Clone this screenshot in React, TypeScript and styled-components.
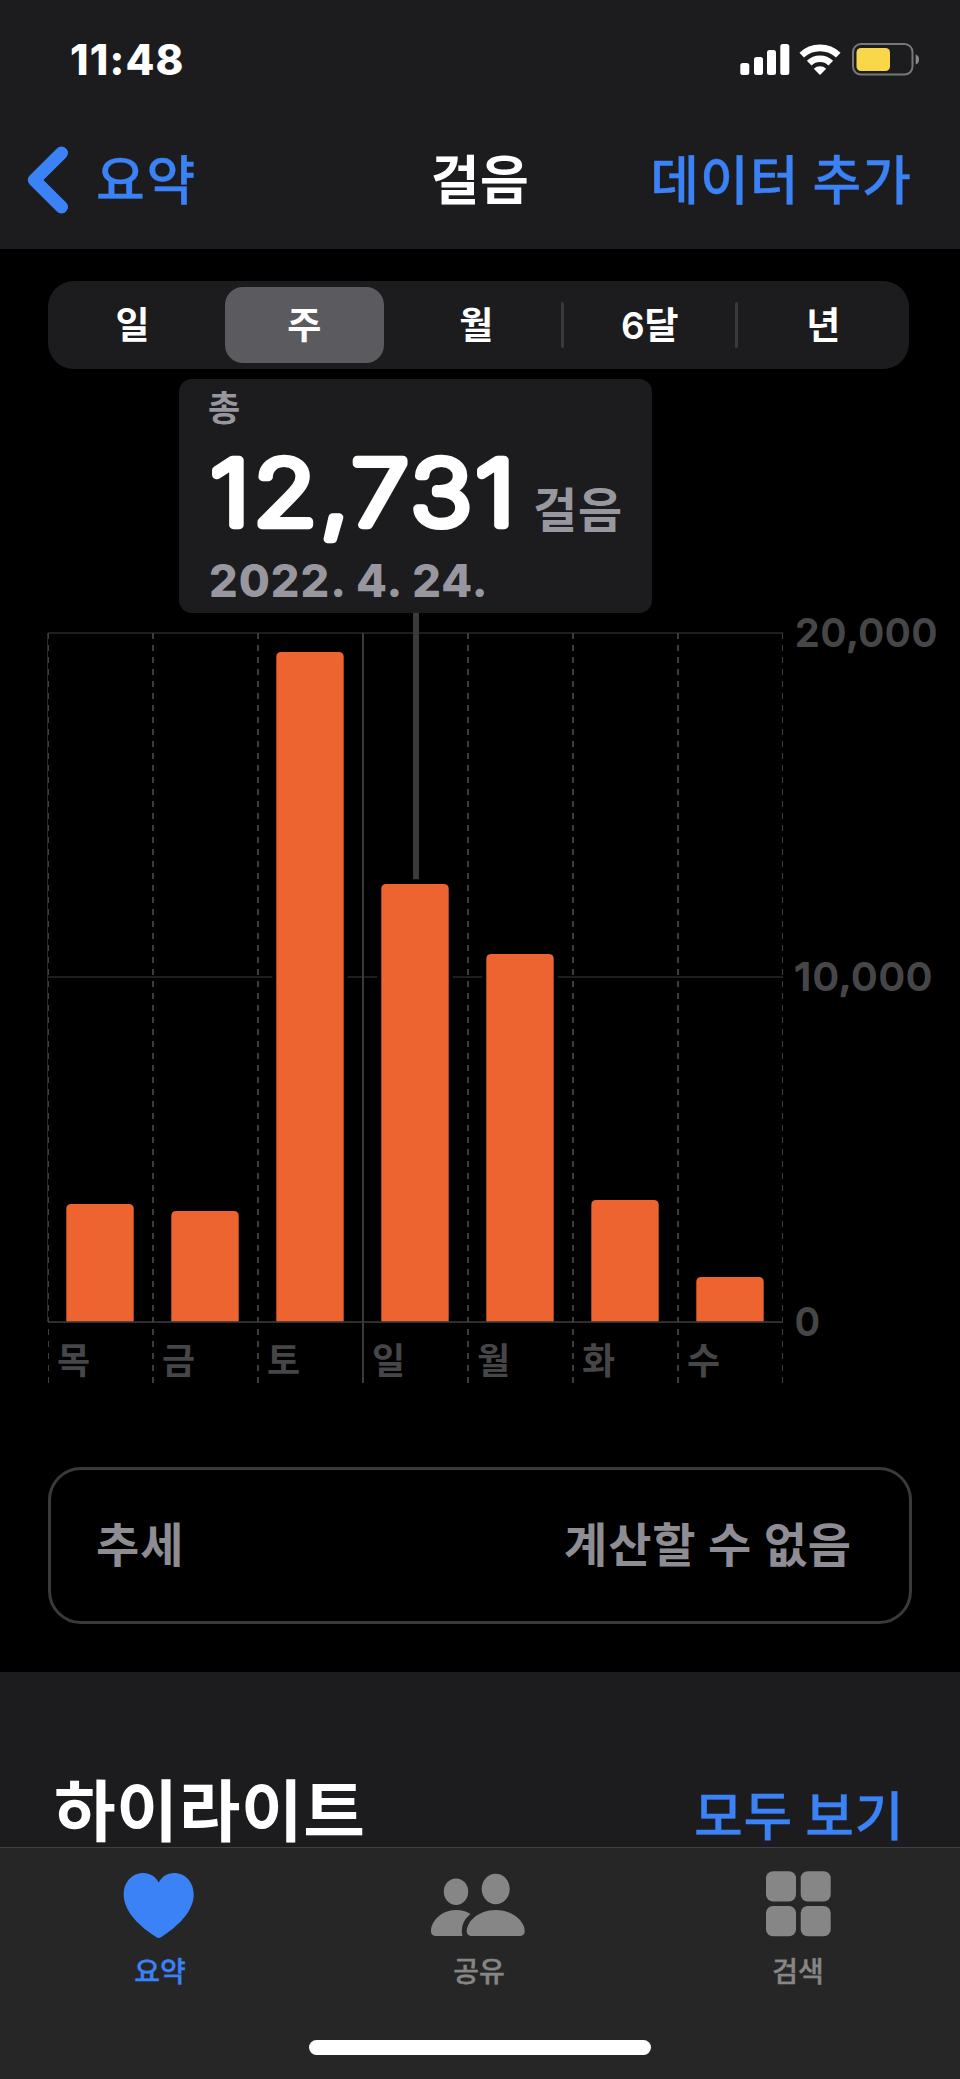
import React from "react";
import styled, { createGlobalStyle } from "styled-components";

const korean = `"Noto Sans CJK KR", sans-serif`;
const latin = `Inter, "Noto Sans CJK KR", sans-serif`;

const GlobalStyle = createGlobalStyle`
  * { box-sizing: border-box; }
  body { margin: 0; background: #000; }
`;

const Screen = styled.div`
  width: 960px;
  height: 2079px;
  display: flex;
  flex-direction: column;
  overflow: hidden;
  background: #000;
  color: #fff;
  font-family: ${korean};
`;

const Header = styled.header`
  height: 249px;
  flex: none;
  background: #1c1c1e;
`;

const StatusBar = styled.div`
  height: 120px;
  padding: 0 40px 0 70px;
  display: flex;
  justify-content: space-between;
  align-items: center;
`;

const Clock = styled.span`
  font: 800 42px/60px ${latin};
  letter-spacing: 1.2px;
`;

const StatusIcons = styled.svg`
  width: 182px;
  height: 36px;
`;

const NavBar = styled.nav`
  height: 129px;
  padding: 0 48px 10px 26px;
  display: grid;
  grid-template-columns: 1fr auto 1fr;
  align-items: center;
`;

const BackButton = styled.div`
  display: flex;
  align-items: center;
  gap: 26px;
  color: #3b82f7;
`;

const Chevron = styled.svg`
  width: 44px;
  height: 72px;
`;

const NavText = styled.span<{ $strong?: boolean; $end?: boolean }>`
  margin: ${(p) => (p.$strong ? "-6px 0 0 22px" : "-6px 0 0")};
  font-size: 53px;
  line-height: 72px;
  letter-spacing: ${(p) => (p.$strong ? "0.5px" : p.$end ? "1px" : "1.8px")};
  font-weight: ${(p) => (p.$strong ? 700 : 500)};
  color: ${(p) => (p.$strong ? "#fff" : "#3b82f7")};
  justify-self: ${(p) => (p.$end ? "end" : "auto")};
  -webkit-text-stroke: ${(p) => (p.$strong ? "0" : "0.3px currentColor")};
  white-space: nowrap;
`;

const Segments = styled.div`
  width: 861px;
  height: 88px;
  margin: 32px 0 0 48px;
  padding: 6px 0;
  flex: none;
  display: grid;
  grid-template-columns: 167px repeat(4, 1fr);
  border-radius: 26px;
  background: #1c1c1e;
`;

const Segment = styled.div<{ $selected?: boolean; $divided?: boolean }>`
  display: flex;
  align-items: center;
  justify-content: center;
  position: relative;
  margin: ${(p) => (p.$selected ? "0 5px 0 10px" : "0")};
  padding: ${(p) => (p.$selected ? "1px 0 0" : "1px 0 0 2px")};
  border-radius: 18px;
  background: ${(p) => (p.$selected ? "#5b5a5f" : "transparent")};
  font: 600 37px/52px ${latin};

  &::before {
    content: "";
    display: ${(p) => (p.$divided ? "block" : "none")};
    position: absolute;
    left: -1px;
    top: 15px;
    width: 3px;
    height: 46px;
    border-radius: 2px;
    background: #3a3a3c;
  }
`;

const ChartArea = styled.section`
  position: relative;
  height: 1098px;
  flex: none;
`;

const ChartCanvas = styled.svg`
  display: block;
  width: 960px;
  height: 1098px;
`;

const AxisNumber = styled.text`
  font: 400 37px ${latin};
  letter-spacing: 1.2px;
  fill: #464648;
  stroke: #464648;
  stroke-width: 1.8px;
  stroke-linejoin: round;
`;

const DayLabel = styled.text`
  font: 700 36px ${korean};
  fill: #464648;
`;

const Callout = styled.div`
  position: absolute;
  left: 179px;
  top: 10px;
  width: 473px;
  height: 234px;
  padding: 0 0 0 30px;
  border-radius: 13px;
  background: #1c1c1e;
  color: #98979f;
`;

const CalloutCaption = styled.div`
  height: 64px;
  margin-left: -1px;
  font: 700 35px/54px ${korean};
`;

const CalloutValue = styled.div`
  height: 104px;
  display: flex;
  align-items: flex-start;
  gap: 22px;
`;

const StepCount = styled.svg`
  width: 302px;
  height: 104px;
  overflow: visible;
`;

const RoundedDigits = styled.text`
  font: 200 90px ${latin};
  letter-spacing: 3.5px;
  fill: #fff;
  stroke: #fff;
  stroke-width: 8.6px;
  stroke-linejoin: round;
`;

const StepUnit = styled.span`
  margin-top: 34px;
  font: 700 48px/60px ${korean};
  letter-spacing: 0.8px;
`;

const CalloutDate = styled.div`
  height: 66px;
  padding-top: 1px;
  font: 800 45px/66px ${latin};
  letter-spacing: 1px;
`;

const TrendCard = styled.div`
  width: 864px;
  height: 157px;
  margin-left: 48px;
  padding: 0 57px 7px 45px;
  flex: none;
  display: flex;
  justify-content: space-between;
  align-items: center;
  border: 3px solid #3a3a3a;
  border-radius: 33px;
  color: #8e8d93;
  font: 700 47px/66px ${korean};
  letter-spacing: 0.9px;
`;

const Highlights = styled.section`
  height: 175px;
  margin-top: 48px;
  padding: 95px 56px 0 54px;
  flex: none;
  display: flex;
  justify-content: space-between;
  align-items: baseline;
  background: #1c1c1e;
`;

const SectionTitle = styled.h2`
  margin: 0;
  font: 700 67px/80px ${korean};
  letter-spacing: 0.7px;
`;

const SeeAll = styled.span`
  font: 500 53px/70px ${korean};
  letter-spacing: 0.6px;
  -webkit-text-stroke: 0.3px currentColor;
  color: #3b82f7;
`;

const TabBar = styled.footer`
  height: 232px;
  flex: none;
  border-top: 1px solid #404040;
  background: #262626;
`;

const Tabs = styled.div`
  display: grid;
  grid-template-columns: 320px 318px 320px;
  height: 192px;
`;

const Tab = styled.div<{ $active?: boolean }>`
  display: flex;
  flex-direction: column;
  align-items: center;
  padding-top: 20px;
  color: ${(p) => (p.$active ? "#3b82f7" : "#868686")};
`;

const TabIcon = styled.svg`
  width: 100px;
  height: 74px;
  fill: currentColor;
`;

const TabLabel = styled.span`
  margin-top: 8px;
  font: 500 28px/40px ${korean};
  -webkit-text-stroke: 0.4px currentColor;
`;

const HomeIndicator = styled.div`
  width: 342px;
  height: 15px;
  margin: 0 auto;
  border-radius: 8px;
  background: #fff;
`;

const BASELINE = 953;
const PLOT_TOP = 264;
const days = [
  { name: "목", height: 118 },
  { name: "금", height: 111 },
  { name: "토", height: 670 },
  { name: "일", height: 438 },
  { name: "월", height: 368 },
  { name: "화", height: 122 },
  { name: "수", height: 45 },
];
const gridX = (i: number) => 48 + i * 105;
const barPath = (x: number, h: number) => {
  const t = BASELINE - h;
  return `M${x} ${BASELINE}V${t + 5}q0-5 5-5h57.4q5 0 5 5V${BASELINE}z`;
};

function StepChart() {
  return (
    <ChartCanvas viewBox="0 0 960 1098">
      <path d="M48 264H783M48 608H783" stroke="#1e1e1e" strokeWidth="2" />
      {days.map((d, i) =>
        d.height > 345 ? (
          <rect key={d.name} x={gridX(i) + 14.3} y="605" width="75.4" height="6" fill="#000" />
        ) : null
      )}
      <path d="M47.5 264V953" stroke="#2a2a2a" strokeWidth="1" />
      {Array.from({ length: 8 }, (_, i) => (
        <path
          key={i}
          d={`M${i === 0 ? 48.5 : i === 7 ? 782.5 : gridX(i)} ${PLOT_TOP}V1014`}
          stroke={i === 3 ? "#3a3a3a" : "#3c3c3c"}
          strokeWidth={i === 0 || i === 7 ? 1 : 2}
          strokeDasharray={i === 3 ? undefined : "6 6"}
        />
      ))}
      {days.map((d, i) => (
        <path key={d.name} d={barPath(gridX(i) + 18.3, d.height)} fill="#ed6430" />
      ))}
      <path d="M48 953H783" stroke="#3a3a3a" strokeOpacity=".8" strokeWidth="2" />
      <path d="M416 244V510.3" stroke="#3a3a3c" strokeWidth="6" />
      <AxisNumber x="795" y="277" textLength="143.500" lengthAdjust="spacingAndGlyphs">20,000</AxisNumber>
      <AxisNumber x="794.500" y="621.300" textLength="139" lengthAdjust="spacingAndGlyphs">10,000</AxisNumber>
      <AxisNumber x="795" y="966.300" textLength="26" lengthAdjust="spacingAndGlyphs">0</AxisNumber>
      {days.map((d, i) => (
        <DayLabel key={d.name} x={gridX(i) + 9} y="1005">
          {d.name}
        </DayLabel>
      ))}
    </ChartCanvas>
  );
}

export default function App() {
  return (
    <Screen>
      <GlobalStyle />
      <Header>
        <StatusBar>
          <Clock>11:48</Clock>
          <StatusIcons viewBox="738 42 182 36">
            <g fill="#fff">
              <rect x="740.3" y="63" width="9" height="12" rx="2.5" />
              <rect x="754" y="57" width="9" height="18" rx="2.5" />
              <rect x="767" y="50" width="9" height="25" rx="2.5" />
              <rect x="780.3" y="44" width="9" height="31" rx="2.5" />
              <path d="M820 75l-6.200-6.200a9 9 0 0 1 12.400 0z" />
            </g>
            <g fill="none" stroke="#fff" strokeWidth="6.600">
              <path d="M809.200 63.200a15.500 15.500 0 0 1 21.600 0" />
              <path d="M801.700 55.200a26.500 26.500 0 0 1 36.600 0" />
            </g>
            <rect x="853" y="44" width="59.500" height="30.600" rx="8" fill="none" stroke="#77777a" strokeWidth="2" />
            <rect x="856.500" y="48" width="33.500" height="23" rx="4.500" fill="#f8d748" />
            <path d="M915.700 54.500q3.300 1 3.300 5t-3.300 5z" fill="#8a8a8c" />
          </StatusIcons>
        </StatusBar>
        <NavBar>
          <BackButton>
            <Chevron viewBox="0 0 44 72">
              <path d="M35.500 9L8.300 36L35.500 63" fill="none" stroke="currentColor" strokeWidth="13" strokeLinecap="round" strokeLinejoin="round" />
            </Chevron>
            <NavText>요약</NavText>
          </BackButton>
          <NavText $strong>걸음</NavText>
          <NavText $end>데이터 추가</NavText>
        </NavBar>
      </Header>
      <Segments>
        <Segment>일</Segment>
        <Segment $selected>주</Segment>
        <Segment>월</Segment>
        <Segment $divided>6달</Segment>
        <Segment $divided>년</Segment>
      </Segments>
      <ChartArea>
        <StepChart />
        <Callout>
          <CalloutCaption>총</CalloutCaption>
          <CalloutValue>
            <StepCount viewBox="0 0 302 104">
              <RoundedDigits x="1.500" y="81.700" textLength="308" lengthAdjust="spacingAndGlyphs">
                12,731
              </RoundedDigits>
            </StepCount>
            <StepUnit>걸음</StepUnit>
          </CalloutValue>
          <CalloutDate>2022. 4. 24.</CalloutDate>
        </Callout>
      </ChartArea>
      <TrendCard>
        <span>추세</span>
        <span>계산할 수 없음</span>
      </TrendCard>
      <Highlights>
        <SectionTitle>하이라이트</SectionTitle>
        <SeeAll>모두 보기</SeeAll>
      </Highlights>
      <TabBar>
        <Tabs>
          <Tab $active>
            <TabIcon viewBox="110.300 1868 100 74">
              <path d="M159 1938c-1.500 0-3-1.200-4.500-2.200C137 1924 124 1910 124 1894.500c0-12.500 8.500-21.500 19.500-21.500 7 0 12.200 3.500 15.500 9.500 3.300-6 8.500-9.500 15.500-9.500 11 0 19.500 9 19.500 21.500 0 15.500-13 29.500-30.500 41.300-1.500 1-3 2.200-4.500 2.200z" />
            </TabIcon>
            <TabLabel>요약</TabLabel>
          </Tab>
          <Tab>
            <TabIcon viewBox="429 1868 100 74">
              <ellipse cx="456" cy="1891.700" rx="12.200" ry="13.200" />
              <ellipse cx="495.700" cy="1889" rx="14" ry="15.200" />
              <path d="M437 1936c-4.500 0-6-1.800-6-5 0-9 9.500-21 25-21 6 0 10.500 1.500 14.500 4-7 5.500-10 13-8 22z" />
              <path d="M472.500 1936c-4 0-5.800-1.700-5.800-5 0-8.500 10.800-21 29-21s29 12.500 29 21c0 3.300-1.800 5-5.800 5z" />
            </TabIcon>
            <TabLabel>공유</TabLabel>
          </Tab>
          <Tab>
            <TabIcon viewBox="748 1868 100 74">
              <rect x="766" y="1871.300" width="30" height="30.300" rx="7" />
              <rect x="800.700" y="1871.300" width="30" height="30.300" rx="7" />
              <rect x="766" y="1906" width="30" height="30.300" rx="7" />
              <rect x="800.700" y="1906" width="30" height="30.300" rx="7" />
            </TabIcon>
            <TabLabel>검색</TabLabel>
          </Tab>
        </Tabs>
        <HomeIndicator />
      </TabBar>
    </Screen>
  );
}
